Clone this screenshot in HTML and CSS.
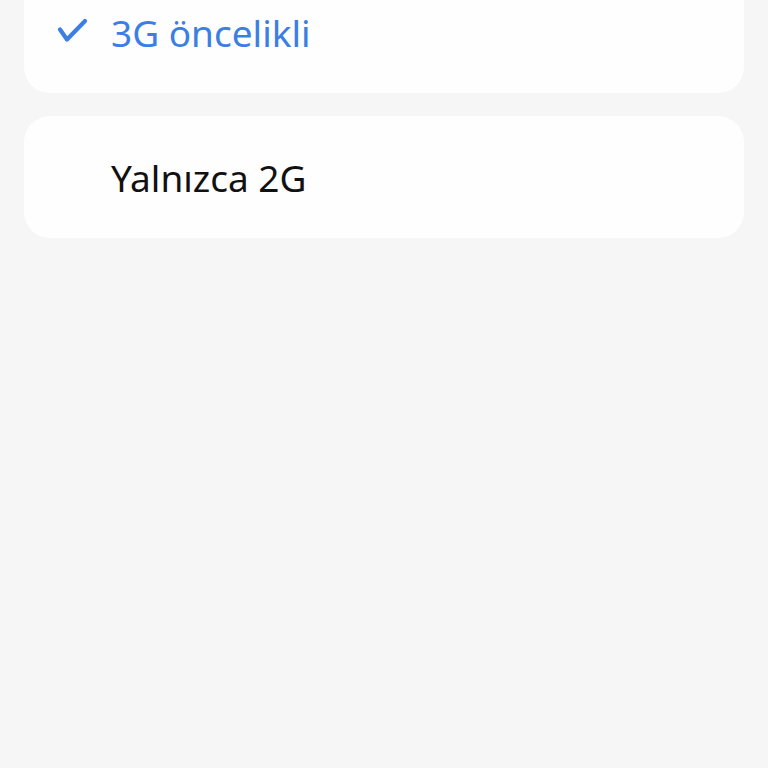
FILE: index.html
```html
<html><head>
    <title>Ağ türü</title>
    <link rel="stylesheet" href="styles.css">
</head>
<body>

<div id="lista">
    <div class="opcao selecionada">
        <svg class="check" width="32" height="28" viewBox="0 0 32 28">
            <path d="M3 11.5 L10 21.5 L28 3" fill="none" stroke="currentColor" stroke-width="4.2" stroke-linecap="round" stroke-linejoin="round"/>
        </svg>
        <span class="rotulo">3G öncelikli</span>
    </div>
    <div class="opcao">
        <span class="rotulo">Yalnızca 2G</span>
    </div>
</div>

</body></html>
```

FILE: styles.css
```css
body {
    margin: 0;
    padding: 0;
    background-color: #f6f6f6;
    font-family: "Noto Sans", sans-serif;
}
#lista {
    display: flex;
    flex-direction: column;
    gap: 23px;
    margin: -29px 24px 0 24px;
}
.opcao {
    display: flex;
    align-items: center;
    height: 122px;
    padding-left: 87px;
    background-color: #fefefe;
    border-radius: 26px;
    position: relative;
}
.check {
    position: absolute;
    left: 33px;
    top: 47px;
    color: #3c7fe4;
}
.rotulo {
    font-size: 37px;
    color: #111111;
}
.selecionada .rotulo {
    color: #3c7fe4;
}
```
